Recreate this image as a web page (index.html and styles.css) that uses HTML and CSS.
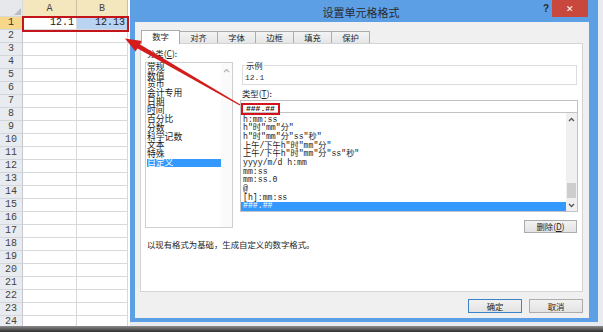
FILE: index.html
```html
<!DOCTYPE html>
<html lang="zh">
<head>
    <meta charset="UTF-8">
    <title>设置单元格格式</title>
    <link rel="stylesheet" href="styles.css">
</head>
<body>
    <div class="screen">
        <div class="sheet">
            <div class="grid">
                <div class="corner"><svg width="10" height="10" viewBox="0 0 10 10"><polygon points="9,2 9,9 2,9" fill="#b9bcc0"/></svg></div>
                <div class="ch">A</div>
                <div class="ch">B</div>

                <div class="rh rh-sel">1</div><div class="c num">12.1</div><div class="c num picked">12.13</div>
                <div class="rh">2</div><div class="c"></div><div class="c"></div>
                <div class="rh">3</div><div class="c"></div><div class="c"></div>
                <div class="rh">4</div><div class="c"></div><div class="c"></div>
                <div class="rh">5</div><div class="c"></div><div class="c"></div>
                <div class="rh">6</div><div class="c"></div><div class="c"></div>
                <div class="rh">7</div><div class="c"></div><div class="c"></div>
                <div class="rh">8</div><div class="c"></div><div class="c"></div>
                <div class="rh">9</div><div class="c"></div><div class="c"></div>
                <div class="rh">10</div><div class="c"></div><div class="c"></div>
                <div class="rh">11</div><div class="c"></div><div class="c"></div>
                <div class="rh">12</div><div class="c"></div><div class="c"></div>
                <div class="rh">13</div><div class="c"></div><div class="c"></div>
                <div class="rh">14</div><div class="c"></div><div class="c"></div>
                <div class="rh">15</div><div class="c"></div><div class="c"></div>
                <div class="rh">16</div><div class="c"></div><div class="c"></div>
                <div class="rh">17</div><div class="c"></div><div class="c"></div>
                <div class="rh">18</div><div class="c"></div><div class="c"></div>
                <div class="rh">19</div><div class="c"></div><div class="c"></div>
                <div class="rh">20</div><div class="c"></div><div class="c"></div>
                <div class="rh">21</div><div class="c"></div><div class="c"></div>
                <div class="rh">22</div><div class="c"></div><div class="c"></div>
                <div class="rh">23</div><div class="c"></div><div class="c"></div>
                <div class="rh">24</div><div class="c"></div><div class="c"></div>
            </div>
            <!-- 标注：A1:B1 红框 -->
            <div class="cell-mark"></div>
        </div>

        <div class="dialog">
            <div class="titlebar">
                <span class="title">设置单元格格式</span>
                <span class="help">?</span>
                <span class="close">✕</span>
            </div>
            <div class="body">
                <div class="tabs">
                    <div class="tab active">数字</div>
                    <div class="tab">对齐</div>
                    <div class="tab">字体</div>
                    <div class="tab">边框</div>
                    <div class="tab">填充</div>
                    <div class="tab">保护</div>
                </div>
                <div class="panel">
                    <div class="panel-main">
                        <div class="cat">
                            <div class="label">分类(<u>C</u>):</div>
                            <div class="listbox">
                                <ul class="cat-list">
                                    <li>常规</li>
                                    <li>数值</li>
                                    <li>货币</li>
                                    <li>会计专用</li>
                                    <li>日期</li>
                                    <li>时间</li>
                                    <li>百分比</li>
                                    <li>分数</li>
                                    <li>科学记数</li>
                                    <li>文本</li>
                                    <li>特殊</li>
                                    <li class="selected">自定义</li>
                                </ul>
                                <div class="cat-scroll">
                                    <svg width="11" height="10" viewBox="0 0 11 10"><polyline points="3,6 5.5,3.5 8,6" fill="none" stroke="#b4b4b4" stroke-width="1.2"/></svg>
                                </div>
                            </div>
                        </div>
                        <div class="detail">
                            <fieldset class="sample">
                                <legend>示例</legend>
                                <div class="sample-value">12.1</div>
                            </fieldset>
                            <div class="label">类型(<u>T</u>):</div>
                            <div class="type-input"><span class="type-mark">###.##</span></div>
                            <div class="fmt-box">
                                <ul class="fmt-list">
                                    <li>h:mm:ss</li>
                                    <li>h"时"mm"分"</li>
                                    <li>h"时"mm"分"ss"秒"</li>
                                    <li>上午/下午h"时"mm"分"</li>
                                    <li>上午/下午h"时"mm"分"ss"秒"</li>
                                    <li>yyyy/m/d h:mm</li>
                                    <li>mm:ss</li>
                                    <li>mm:ss.0</li>
                                    <li>@</li>
                                    <li>[h]:mm:ss</li>
                                    <li class="selected">###.##</li>
                                </ul>
                                <div class="vscroll">
                                    <svg width="11" height="12" viewBox="0 0 11 12"><polyline points="3,8 5.5,5.5 8,8" fill="none" stroke="#555" stroke-width="1.3"/></svg>
                                    <div class="track"><div class="thumb"></div></div>
                                    <svg width="11" height="12" viewBox="0 0 11 12"><polyline points="3,5 5.5,7.5 8,5" fill="none" stroke="#555" stroke-width="1.3"/></svg>
                                </div>
                            </div>
                            <div class="del-row">
                                <button class="btn">删除(<u>D</u>)</button>
                            </div>
                        </div>
                    </div>
                    <p class="desc">以现有格式为基础，生成自定义的数字格式。</p>
                </div>
                <div class="footer">
                    <button class="btn btn-default">确定</button>
                    <button class="btn">取消</button>
                </div>
            </div>
        </div>

        <!-- 标注箭头 -->
        <svg class="arrow" width="603" height="326" viewBox="0 0 603 326">
            <polygon points="139.3,43.9 240.3,104.6 239.7,105.4 136.7,48.1" fill="#d41c1c"/>
            <polygon points="125,38.5 142,41 135.5,51.5" fill="#d41c1c"/>
        </svg>
    </div>
    <div class="shadow"></div>
</body>
</html>
```

FILE: styles.css
```css
* {
    box-sizing: border-box;
}
body {
    margin: 0;
    width: 603px;
    height: 332px;
    overflow: hidden;
    background: #fff;
    font-family: 'Noto Sans CJK SC', sans-serif;
    color: #1e1e1e;
}
.screen {
    position: relative;
    display: flex;
    height: 326px;
    overflow: hidden;
    background: #e9ecef;
}
.shadow {
    height: 6px;
    background: linear-gradient(#8c8c8c, #2e2e2e);
}

/* 表格 */
.sheet {
    position: relative;
    width: 130px;
    background: #fff;
}
.grid {
    display: grid;
    grid-template-columns: 23px 54px 51px;
    grid-template-rows: 17px;
    grid-auto-rows: 13px;
    font-family: 'Liberation Mono', monospace;
    font-size: 10px;
    color: #444;
}
.grid > div {
    border-right: 1px solid #d6d8db;
    border-bottom: 1px solid #d6d8db;
    line-height: 12px;
    overflow: hidden;
}
.corner {
    display: flex;
    align-items: flex-end;
    justify-content: flex-end;
    background: #e6e8eb;
}
.corner svg {
    display: block;
}
.ch {
    background: #f4e6bd;
    text-align: center;
    line-height: 17px !important;
    border-right-color: #c9c0a6 !important;
    border-bottom-color: #c9b98e !important;
}
.rh {
    background: #e8ebef;
    text-align: center;
    border-right-color: #c5c9cf !important;
    border-bottom-color: #d3d7dc !important;
}
.rh-sel {
    background: #f7d78a;
    color: #333;
}
.num {
    text-align: right;
    padding-right: 2px;
    color: #222;
}
.picked {
    background: #b8d4f0;
}
.cell-mark {
    position: absolute;
    left: 22px;
    top: 16px;
    width: 107px;
    height: 16px;
    border: 2px solid #c3151b;
}

/* 对话框 */
.dialog {
    display: flex;
    flex-direction: column;
    width: 468px;
    height: 322px;
    background: #5c9fe5;
}
.titlebar {
    display: flex;
    height: 22px;
    padding-right: 10px;
}
.title {
    flex: 1;
    padding-left: 49px;
    text-align: center;
    font-size: 11px;
    line-height: 24px;
    color: #2b2b2b;
}
.help {
    width: 9px;
    font-family: 'Liberation Sans', sans-serif;
    font-size: 10px;
    font-weight: bold;
    line-height: 17px;
    color: #2b2b2b;
}
.close {
    width: 36px;
    height: 17px;
    background: #c9483e;
    color: #fff;
    text-align: center;
    font-size: 9px;
    line-height: 17px;
}
.body {
    flex: 1;
    display: flex;
    flex-direction: column;
    margin: 0 9px 4px 5px;
    padding: 8px 6px 0 5px;
    background: #f0f0f0;
    font-size: 8.4px;
}
.tabs {
    display: flex;
    align-items: flex-end;
    height: 13px;
    padding-left: 1px;
}
.tab {
    width: 39px;
    height: 12px;
    margin-right: -1px;
    border: 1px solid #acacac;
    border-bottom: none;
    background: linear-gradient(#f3f3f3, #e6e6e6);
    text-align: center;
    line-height: 11px;
}
.tab.active {
    position: relative;
    z-index: 1;
    height: 14px;
    margin-bottom: -1px;
    background: #fff;
}
.panel {
    height: 249px;
    border: 1px solid #d4d4d4;
    background: #fff;
}
.panel-main {
    display: flex;
    padding-left: 4px;
}
.label {
    padding-left: 2px;
    line-height: 13px;
}
.cat .label {
    margin-top: 3px;
}
.listbox {
    display: flex;
    width: 88px;
    height: 166px;
    margin-top: 2px;
    border: 1px solid #cfcfcf;
}
.cat-list {
    flex: 1;
    list-style: none;
    margin: 0;
    padding: 0 0 0 1px;
    font-size: 8.8px;
    line-height: 8.7px;
    color: #1a1a1a;
}
.cat-list li {
    height: 8.7px;
}
.cat-list .selected {
    background: #3399ff;
    color: #fff;
}
.cat-scroll {
    width: 11px;
    background: #fafafa;
    padding-top: 3px;
}
.cat-scroll svg {
    display: block;
}
.detail {
    width: 338px;
    margin-left: 7px;
}
.sample {
    margin: 15px 1px 0 2px;
    padding: 2px 2px 1px;
    border: 1px solid #dcdcdc;
    min-width: 0;
}
.sample legend {
    padding: 0 1px;
    line-height: 12px;
}
.sample-value {
    font-family: 'Liberation Mono', monospace;
    font-size: 8px;
    line-height: 10px;
    color: #333;
}
.detail .label {
    margin-top: 2px;
}
.type-input {
    height: 13px;
    border: 1px solid #c2c2c2;
    background: #fff;
}
.type-mark {
    display: inline-block;
    height: 12px;
    margin-top: -1px;
    padding: 0 3px;
    border: 2px solid #d3141c;
    font-family: 'Liberation Mono', monospace;
    font-size: 8px;
    font-weight: bold;
    line-height: 8px;
    color: #111;
}
.fmt-box {
    display: flex;
    height: 99px;
    border: 1px solid #c2c2c2;
    border-top: none;
}
.fmt-list {
    flex: 1;
    list-style: none;
    margin: 0;
    padding: 2.6px 0 0;
    font-family: 'Liberation Mono', 'Noto Sans CJK SC', monospace;
    font-size: 8.2px;
    line-height: 8.7px;
    color: #1a1a1a;
    white-space: nowrap;
}
.fmt-list li {
    height: 8.7px;
    padding-left: 2px;
}
.fmt-list .selected {
    background: #3399ff;
    color: #fff;
}
.vscroll {
    display: flex;
    flex-direction: column;
    width: 11px;
    background: #f0f0f0;
}
.vscroll svg {
    display: block;
}
.track {
    flex: 1;
}
.thumb {
    height: 15px;
    margin: 58px 1px 0;
    background: #cdcdcd;
}
.del-row {
    display: flex;
    justify-content: flex-end;
    margin-top: 8px;
    padding-right: 1px;
}
.btn {
    width: 53px;
    height: 13px;
    padding: 0;
    border: 1px solid #acacac;
    background: linear-gradient(#f2f2f2, #e3e3e3);
    font-family: 'Noto Sans CJK SC', sans-serif;
    font-size: 8.4px;
    line-height: 11px;
    color: #1e1e1e;
}
.desc {
    margin: 5px 0 0;
    padding-left: 6px;
    line-height: 12px;
}
.footer {
    display: flex;
    justify-content: flex-end;
    gap: 7px;
    margin-top: 7px;
}
.footer .btn {
    width: 54px;
    height: 14px;
}
.btn-default {
    border-color: #3c82c4;
}

.arrow {
    position: absolute;
    left: 0;
    top: 0;
    pointer-events: none;
}
```
